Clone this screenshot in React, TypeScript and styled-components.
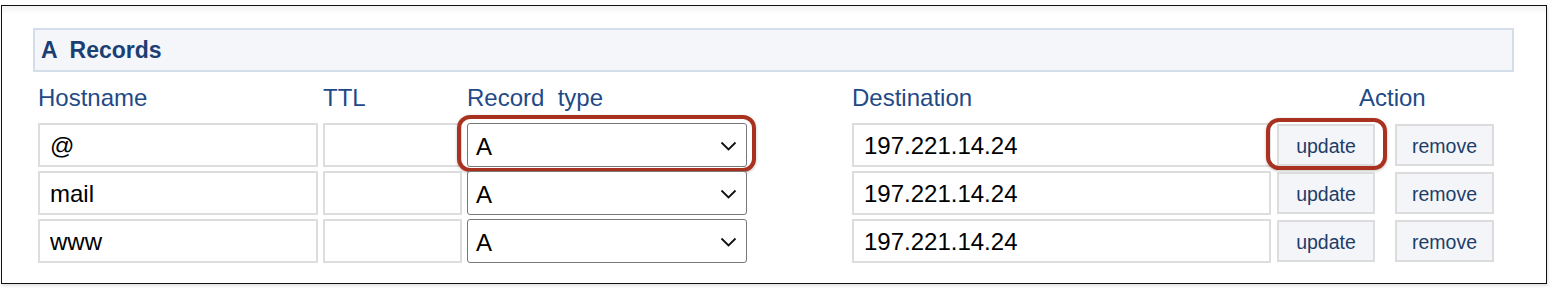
import React from 'react';
import styled, { createGlobalStyle, css } from 'styled-components';

const GlobalStyle = createGlobalStyle`
  html, body {
    margin: 0;
    padding: 0;
    background: #ffffff;
    font-family: "Liberation Sans", Arial, sans-serif;
  }
`;

const Page = styled.div`
  padding: 5px 0 0 1px;
  width: 1552px;
  height: 290px;
  box-sizing: border-box;
`;

const Frame = styled.div`
  width: 1546px;
  height: 279px;
  box-sizing: border-box;
  border: 1px solid #111;
  padding: 22px 0 0 31px;
  background: linear-gradient(#f1f2f3 0px, #ffffff 8px);
  box-shadow: 1px 2px 3px rgba(0, 0, 0, 0.12);
`;

const SectionBar = styled.div`
  width: 1481px;
  height: 44px;
  box-sizing: border-box;
  display: flex;
  align-items: center;
  padding-left: 6px;
  background: #f4f6f9;
  border: 2px solid #d3deea;
`;

const SectionTitle = styled.div`
  font-size: 23px;
  font-weight: 700;
  color: #1b3f74;
  white-space: pre;
`;

const Table = styled.div`
  display: flex;
  flex-direction: column;
  gap: 4px;
  margin-top: 2px;
  padding-left: 5px;
`;

const Row = styled.div<{ $h: number }>`
  display: flex;
  align-items: center;
  height: ${(p) => p.$h}px;
`;

const HeadCell = styled.div<{ $w: number; $ml?: number; $pl?: number }>`
  width: ${(p) => p.$w}px;
  margin-left: ${(p) => p.$ml ?? 5}px;
  padding-left: ${(p) => p.$pl ?? 0}px;
  padding-top: 2px;
  box-sizing: border-box;
  font-size: 24px;
  color: #1f4a86;
  white-space: pre;
  &:first-child { margin-left: 0; }
`;

const Highlight = css`
  &::after {
    content: "";
    position: absolute;
    border: 4px solid #a8321f;
    border-radius: 13px;
    box-shadow: 0 1px 3px rgba(0, 0, 0, 0.25);
    pointer-events: none;
  }
`;

const Field = styled.input<{ $w: number; $ml?: number }>`
  width: ${(p) => p.$w}px;
  height: 44px;
  margin: 0 0 0 ${(p) => p.$ml ?? 5}px;
  box-sizing: border-box;
  border: 2px solid #dddddd;
  padding: 2px 10px 0;
  font-family: "Liberation Sans", Arial, sans-serif;
  font-size: 24px;
  color: #000;
  background: #fff;
  outline: none;
  &:first-child { margin-left: 0; }
`;

const SelectWrap = styled.div<{ $marked?: boolean }>`
  position: relative;
  width: 280px;
  height: 44px;
  margin-left: 5px;
  ${(p) => p.$marked && Highlight}
  &::after {
    inset: -8px -9px -5px -10px;
  }
`;

const Select = styled.select`
  appearance: none;
  width: 100%;
  height: 100%;
  box-sizing: border-box;
  border: 1.5px solid #777;
  border-radius: 3px;
  padding: 2px 8px 0;
  font-family: "Liberation Sans", Arial, sans-serif;
  font-size: 24px;
  color: #000;
  background: #fff;
  outline: none;
`;

const Chevron = styled.svg`
  position: absolute;
  right: 10px;
  top: 18px;
  pointer-events: none;
`;

const ButtonWrap = styled.div<{ $ml: number; $marked?: boolean }>`
  position: relative;
  margin-left: ${(p) => p.$ml}px;
  ${(p) => p.$marked && Highlight}
  &::after {
    inset: -6px -12px -4px -11px;
  }
`;

const ActionButton = styled.button<{ $w: number }>`
  width: ${(p) => p.$w}px;
  height: 42px;
  box-sizing: border-box;
  border: 2px solid #dcdcdc;
  background: #f3f5f8;
  font-family: "Liberation Sans", Arial, sans-serif;
  font-size: 19.5px;
  color: #1f3c69;
  padding: 2px 0 0;
  cursor: pointer;
`;

type RecordRow = { host: string; type: string; dest: string; marked?: boolean };

const rows: RecordRow[] = [
  { host: '@', type: 'A', dest: '197.221.14.24', marked: true },
  { host: 'mail', type: 'A', dest: '197.221.14.24' },
  { host: 'www', type: 'A', dest: '197.221.14.24' },
];

const App: React.FC = () => {
  return (
    <Page>
      <GlobalStyle />
      <Frame>
        <SectionBar>
          <SectionTitle>A  Records</SectionTitle>
        </SectionBar>
        <Table>
          <Row $h={45}>
            <HeadCell $w={280} $ml={0}>Hostname</HeadCell>
            <HeadCell $w={139}>TTL</HeadCell>
            <HeadCell $w={280}>Record  type</HeadCell>
            <HeadCell $w={419} $ml={105}>Destination</HeadCell>
            <HeadCell $w={217} $ml={6} $pl={82}>Action</HeadCell>
          </Row>
          {rows.map((r) => (
            <Row $h={44} key={r.host}>
              <Field $w={280} $ml={0} defaultValue={r.host} readOnly />
              <Field $w={139} defaultValue="" readOnly />
              <SelectWrap $marked={r.marked}>
                <Select defaultValue={r.type}>
                  <option value="A">A</option>
                  <option value="AAAA">AAAA</option>
                  <option value="CNAME">CNAME</option>
                </Select>
                <Chevron width="17" height="10" viewBox="0 0 17 10">
                  <path d="M1.5 1.5 L8.5 8.5 L15.5 1.5" fill="none" stroke="#111" strokeWidth="1.8" />
                </Chevron>
              </SelectWrap>
              <Field $w={419} $ml={105} defaultValue={r.dest} readOnly />
              <ButtonWrap $ml={6} $marked={r.marked}>
                <ActionButton $w={98}>update</ActionButton>
              </ButtonWrap>
              <ButtonWrap $ml={20}>
                <ActionButton $w={99}>remove</ActionButton>
              </ButtonWrap>
            </Row>
          ))}
        </Table>
      </Frame>
    </Page>
  );
};

export default App;
